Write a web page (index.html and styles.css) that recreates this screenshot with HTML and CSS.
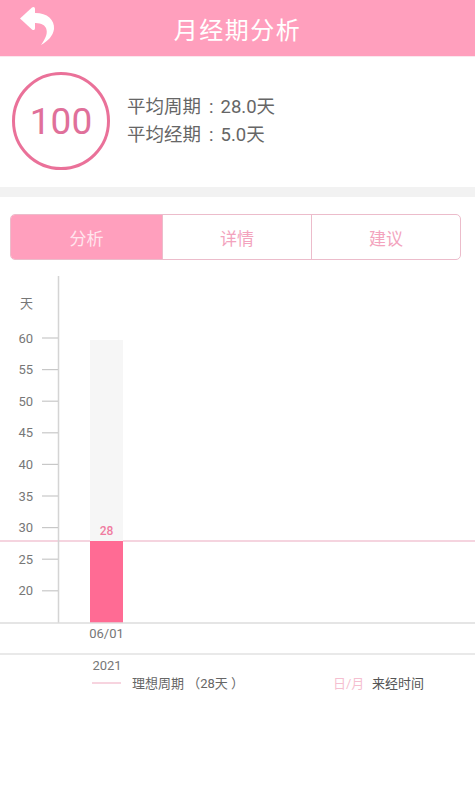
FILE: index.html
```html
<!DOCTYPE html>
<html lang="zh">
<head>
<meta charset="utf-8">
<link rel="stylesheet" href="styles.css">
</head>
<body>
<header class="topbar">
  <svg class="back" viewBox="0 0 40 40" width="40" height="40">
    <path d="M1,12.5 L13,1.5 C14.5,0.3 16,1 16,3 L16,22 C16,24 14.5,24.7 13,23.5 Z" fill="#fff"/>
    <path d="M14,7 C27,6 36,13 35,23 C34,30 29,35 22,39 C27,32 29,27 27,22 C25,18 21,17 14,17 Z" fill="#fff"/>
  </svg>
  <h1 class="title">月经期分析</h1>
</header>
<section class="summary">
  <div class="score">100</div>
  <div class="stats">
    <div>平均周期<span class="colon">:</span>28.0天</div>
    <div>平均经期<span class="colon">:</span>5.0天</div>
  </div>
</section>
<div class="band"></div>
<nav class="tabs">
  <div class="tab active">分析</div>
  <div class="tab">详情</div>
  <div class="tab">建议</div>
</nav>
<section class="chart">
  <svg class="chart-svg" viewBox="0 0 475 460" width="475" height="460">
    <line x1="0" y1="281" x2="475" y2="281" stroke="#f2c6d4" stroke-width="1.5"/>
    <rect x="90" y="80" width="33" height="283" fill="#f6f6f6"/>
    <rect x="90" y="281" width="33" height="82" fill="#ff6b94"/>
    <line x1="58.5" y1="16" x2="58.5" y2="363" stroke="#d4d4d4" stroke-width="1.5"/>
    <line x1="0" y1="363" x2="475" y2="363" stroke="#dcdcdc" stroke-width="1.5"/>
    <line x1="0" y1="394" x2="475" y2="394" stroke="#e2e2e2" stroke-width="1.5"/>
    <g stroke="#c8c8c8" stroke-width="1.2">
      <line x1="42" y1="78" x2="58" y2="78"/>
      <line x1="42" y1="109.6" x2="58" y2="109.6"/>
      <line x1="42" y1="141.2" x2="58" y2="141.2"/>
      <line x1="42" y1="172.8" x2="58" y2="172.8"/>
      <line x1="42" y1="204.4" x2="58" y2="204.4"/>
      <line x1="42" y1="236" x2="58" y2="236"/>
      <line x1="42" y1="267.6" x2="58" y2="267.6"/>
      <line x1="42" y1="299.2" x2="58" y2="299.2"/>
      <line x1="42" y1="330.8" x2="58" y2="330.8"/>
    </g>
    <g class="axis-label" text-anchor="end">
      <text x="33" y="82.5">60</text>
      <text x="33" y="114">55</text>
      <text x="33" y="145.7">50</text>
      <text x="33" y="177.3">45</text>
      <text x="33" y="209">40</text>
      <text x="33" y="240.5">35</text>
      <text x="33" y="272">30</text>
      <text x="33" y="303.7">25</text>
      <text x="33" y="335.3">20</text>
    </g>
    <text class="axis-label" x="20" y="48">天</text>
    <text class="bar-label" x="106.5" y="275" text-anchor="middle">28</text>
    <text class="axis-label" x="106.5" y="378" text-anchor="middle">06/01</text>
    <text class="axis-label" x="107" y="410" text-anchor="middle">2021</text>
    <line x1="92" y1="423" x2="121" y2="423" stroke="#f2b8ca" stroke-width="1.2"/>
    <text class="legend" x="132" y="428">理想周期 （28天 ）</text>
    <text class="legend pinkish" x="333" y="428">日/月</text>
    <text class="legend dark" x="372" y="428">来经时间</text>
  </svg>
</section>
</body>
</html>
```
FILE: styles.css
```css
* { box-sizing: border-box; }
body {
  margin: 0;
  width: 475px;
  background: #fff;
  font-family: "Roboto", "Noto Sans CJK SC", sans-serif;
}
.topbar {
  height: 56px;
  background: #ff9fbd;
  display: flex;
  align-items: center;
  justify-content: center;
  position: relative;
}
.back {
  position: absolute;
  left: 19px;
  top: 6px;
}
.title {
  margin: 0;
  color: #fff;
  font-size: 24px;
  font-weight: 400;
  font-family: "Noto Sans CJK SC", sans-serif;
  letter-spacing: 1.5px;
}
.summary {
  height: 131px;
  border-top: 1px solid #fbe7ee;
  display: flex;
  align-items: center;
  padding-left: 12px;
  gap: 17px;
  padding-bottom: 2px;
}
.score {
  width: 98px;
  height: 98px;
  border: 3px solid #ea7199;
  border-radius: 50%;
  display: flex;
  align-items: center;
  justify-content: center;
  color: #e0709a;
  font-size: 37px;
  font-family: "Roboto", sans-serif;
}
.stats {
  color: #666;
  font-size: 18.5px;
  line-height: 28px;
  font-family: "Roboto", "Noto Sans CJK SC", sans-serif;
}
.colon {
  margin: 0 7px 0 8px;
}
.band {
  height: 10px;
  background: #f2f2f2;
}
.tabs {
  margin: 17px 14px 0 10px;
  height: 46px;
  display: grid;
  grid-template-columns: 151px 149px 1fr;
  border: 1.5px solid #ecbccb;
  border-radius: 5px;
  overflow: hidden;
}
.tab {
  display: flex;
  align-items: center;
  justify-content: center;
  font-family: "Noto Sans CJK SC", sans-serif;
  font-size: 17px;
  color: #f3a3bd;
  border-left: 1.5px solid #ecbccb;
}
.tab.active {
  background: #ff9fbd;
  color: #ffe6ee;
  border-left: none;
}
.chart {
  height: 472px;
}
.chart-svg {
  display: block;
}
.axis-label {
  font-size: 13px;
  fill: #777;
  font-family: "Roboto", "Noto Sans CJK SC", sans-serif;
}
.bar-label {
  font-size: 12px;
  font-weight: 500;
  fill: #f07ca0;
  font-family: "Roboto", sans-serif;
}
.legend {
  font-size: 13px;
  fill: #666;
  font-family: "Roboto", "Noto Sans CJK SC", sans-serif;
}
.legend.pinkish { fill: #f5bfd0; }
.legend.dark { fill: #555; }
```
